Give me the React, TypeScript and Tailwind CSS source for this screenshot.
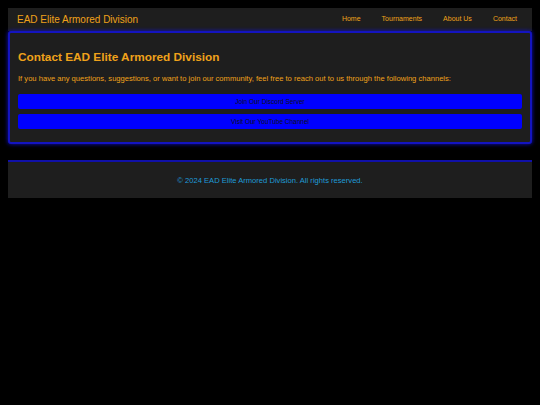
export default function App() {
  const links = ["Home", "Tournaments", "About Us", "Contact"];

  return (
    <div
      className="min-h-[405px] bg-black p-[8px] text-[#f0a21a]"
      style={{ fontFamily: '"Liberation Sans", Arial, sans-serif' }}
    >
      {/* HEADER */}
      <header className="flex h-[23px] items-center justify-between bg-[#1e1e1e] pl-[9px] pr-[15px]">
        <h1 className="text-[10px] leading-none">EAD Elite Armored Division</h1>
        <nav className="flex items-center gap-[21px] text-[7px]">
          {links.map((l) => (
            <a key={l} href="#" className="text-[#f0a21a]">
              {l}
            </a>
          ))}
        </nav>
      </header>

      {/* CONTACT */}
      <section className="rounded-[3px] border-2 border-[#1414c0] bg-[#1e1e1e] px-[8px] pb-[13px] pt-[19px] shadow-[0_0_4px_#1010c8]">
        <h2 className="text-[11.8px] font-bold leading-none">
          Contact EAD Elite Armored Division
        </h2>
        <p className="mt-[11px] text-[7.6px] leading-none">
          If you have any questions, suggestions, or want to join our community, feel free to reach
          out to us through the following channels:
        </p>
        <div className="mt-[12px] flex flex-col gap-[5px]">
          <a
            href="#"
            className="flex h-[15px] items-center justify-center rounded-[2px] bg-[#0000ff] text-[6.5px] text-[#111]"
          >
            Join Our Discord Server
          </a>
          <a
            href="#"
            className="flex h-[15px] items-center justify-center rounded-[2px] bg-[#0000ff] text-[6.5px] text-[#111]"
          >
            Visit Our YouTube Channel
          </a>
        </div>
      </section>

      {/* FOOTER */}
      <footer className="mt-[16px] flex h-[38px] items-center justify-center border-t-2 border-[#1010a8] bg-[#1e1e1e] text-[7.6px] text-[#1e9bd7]">
        © 2024 EAD Elite Armored Division. All rights reserved.
      </footer>
    </div>
  );
}
